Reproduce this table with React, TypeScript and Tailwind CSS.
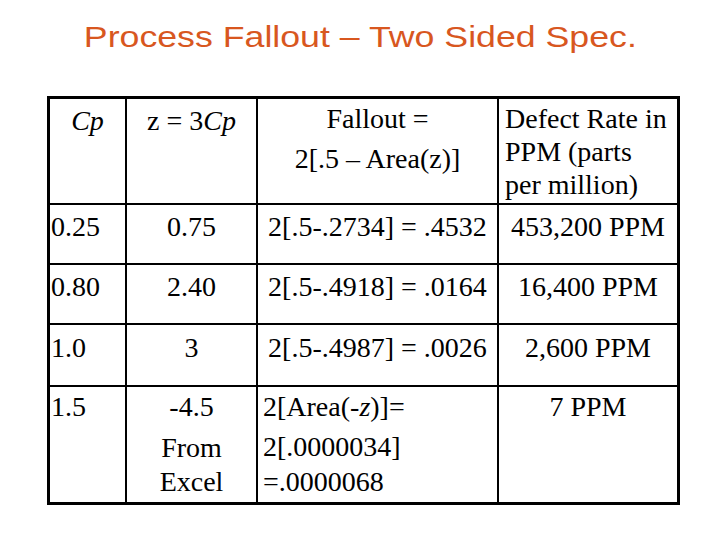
function Cell({ className = "", children }: { className?: string; children?: React.ReactNode }) {
  return <div className={"bg-white font-['Liberation_Serif'] " + className}>{children}</div>
}

export default function App() {
  const rows = [
    { cp: "0.25", z: "0.75", fall: "2[.5-.2734] = .4532", ppm: "453,200 PPM", pt: "pt-[8px]" },
    { cp: "0.80", z: "2.40", fall: "2[.5-.4918] = .0164", ppm: "16,400 PPM", pt: "pt-[8px]" },
    { cp: "1.0", z: "3", fall: "2[.5-.4987] = .0026", ppm: "2,600 PPM", pt: "pt-[9px]" },
  ]

  return (
    <div className="w-[720px] h-[540px] bg-white overflow-hidden">
      {/* Title */}
      <div className="pt-[22px] flex justify-center">
        <h1 className="font-['Liberation_Sans'] text-[30px] leading-[30px] text-[#d8571f] scale-x-[1.19] whitespace-nowrap">
          Process Fallout – Two Sided Spec.
        </h1>
      </div>

      {/* Table */}
      <div className="font-['Liberation_Serif'] text-[28px] text-black ml-[47px] mt-[44px] grid w-fit bg-black border-[3px] border-black gap-[2px] grid-cols-[75px_129px_239px_178px] grid-rows-[104px_58px_58px_60px_115px]">
        {/* Header */}
        <Cell className="pt-[8px] leading-[28px] text-center italic">Cp</Cell>
        <Cell className="pt-[8px] leading-[28px] text-center">
          z = 3<i>Cp</i>
        </Cell>
        <Cell className="pt-0 leading-[40px] text-center">
          <div>Fallout =</div>
          <div>2[.5 – Area(z)]</div>
        </Cell>
        <Cell className="pt-[3px] pl-[6px] leading-[33px]">
          <div>Defect Rate in</div>
          <div>PPM (parts</div>
          <div>per million)</div>
        </Cell>

        {rows.map((r) => (
          <div key={r.cp} className="contents">
            <Cell className={`${r.pt} leading-[28px] pl-px`}>{r.cp}</Cell>
            <Cell className={`${r.pt} leading-[28px] text-center`}>{r.z}</Cell>
            <Cell className={`${r.pt} leading-[28px] text-center whitespace-nowrap`}>{r.fall}</Cell>
            <Cell className={`${r.pt} leading-[28px] text-center`}>{r.ppm}</Cell>
          </div>
        ))}

        {/* Last row */}
        <Cell className="pt-[6px] leading-[28px] pl-px">1.5</Cell>
        <Cell className="pt-[6px] leading-[28px] text-center">
          <div>-4.5</div>
          <div className="mt-[13px]">From</div>
          <div className="mt-[6px]">Excel</div>
        </Cell>
        <Cell className="pt-[6px] leading-[28px] pl-[5px]">
          <div>
            2[Area(-<i>z</i>)]=
          </div>
          <div className="mt-[12px]">2[.0000034]</div>
          <div className="mt-[7px]">=.0000068</div>
        </Cell>
        <Cell className="pt-[6px] leading-[28px] text-center">7 PPM</Cell>
      </div>
    </div>
  )
}
